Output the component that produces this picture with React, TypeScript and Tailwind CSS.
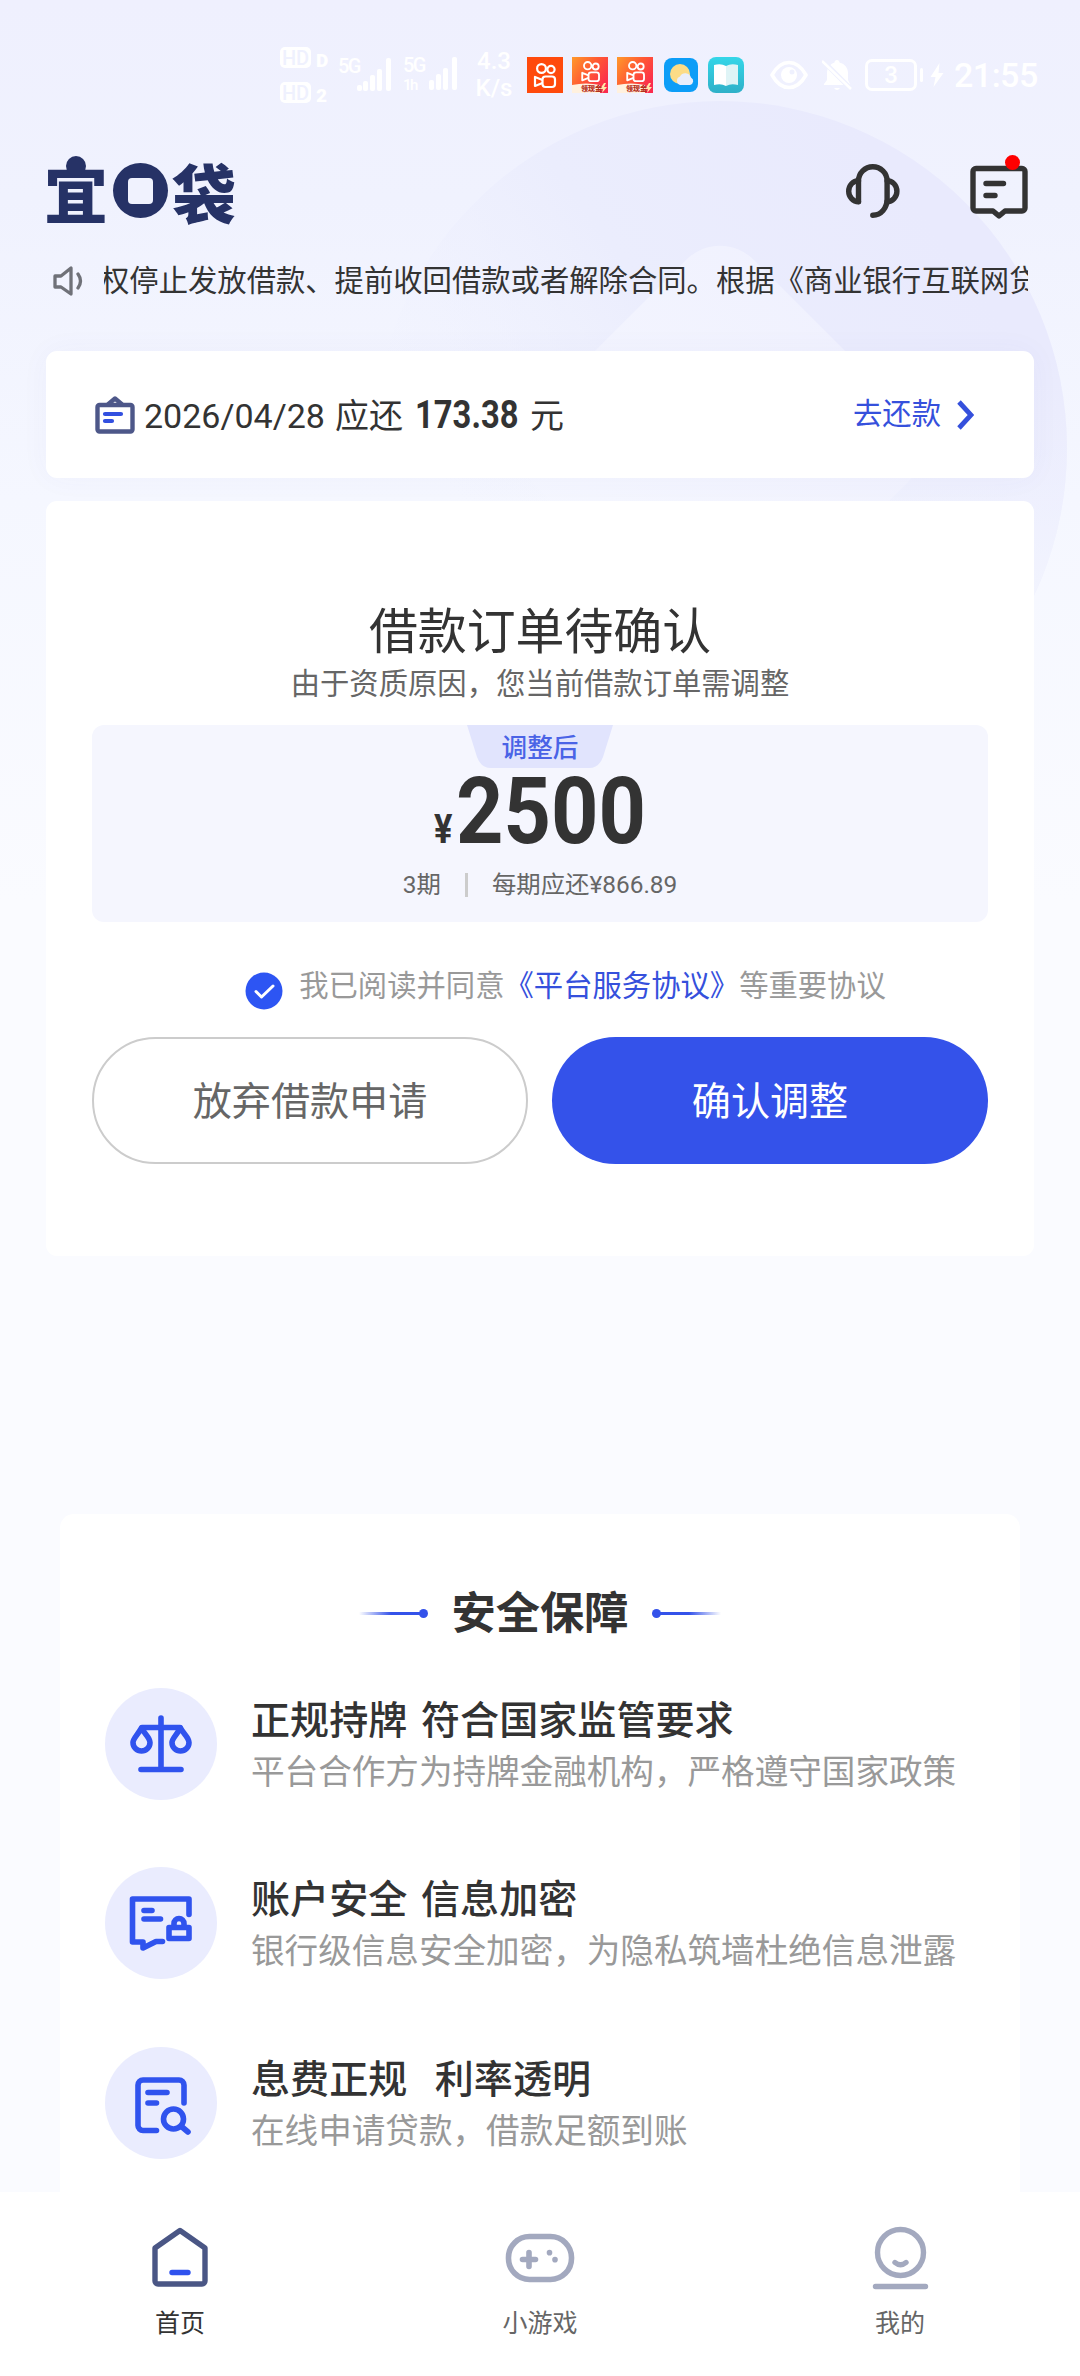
import type { ReactNode } from 'react';

const notice = '权停止发放借款、提前收回借款或者解除合同。根据《商业银行互联网贷款管理';

function Backdrop() {
    return (
        <svg className="absolute left-0 top-0" width="1080" height="900" viewBox="0 0 1080 900" fill="none">
            <defs>
                <linearGradient id="coin" x1="900" y1="180" x2="460" y2="500" gradientUnits="userSpaceOnUse">
                    <stop offset="0" stopColor="#e9eafd" />
                    <stop offset="0.5" stopColor="#ebedfd" />
                    <stop offset="1" stopColor="#f0f2fe" stopOpacity="0" />
                </linearGradient>
                <linearGradient id="coinFade" x1="0" y1="350" x2="0" y2="640" gradientUnits="userSpaceOnUse">
                    <stop offset="0" stopColor="#f4f6ff" stopOpacity="0" />
                    <stop offset="1" stopColor="#f6f8ff" stopOpacity="0.8" />
                </linearGradient>
                <linearGradient id="coinHole" x1="720" y1="240" x2="720" y2="640" gradientUnits="userSpaceOnUse">
                    <stop offset="0" stopColor="#f0f1fe" />
                    <stop offset="1" stopColor="#f5f7ff" />
                </linearGradient>
            </defs>
            <circle cx="720" cy="448" r="347" fill="url(#coin)" />
            <circle cx="720" cy="448" r="347" fill="url(#coinFade)" />
            <rect x="563" y="291" width="314" height="314" rx="48" transform="rotate(45 720 448)" fill="url(#coinHole)" />
        </svg>
    );
}

function SignalBars({ short }: { short?: boolean }) {
    return (
        <svg width="36" height="36" viewBox="0 0 36 36" fill="white">
            {!short && <rect x="0" y="28" width="5" height="6" rx="2" />}
            <rect x="6" y="24" width="5" height="10" rx="2" />
            <rect x="13" y="18" width="5" height="16" rx="2" />
            <rect x="20" y="12" width="5" height="22" rx="2" />
            <rect x="29" y="1" width="5" height="33" rx="2" />
        </svg>
    );
}

function HdBadge({ sim }: { sim: string }) {
    return (
        <div className="flex items-end gap-[5px]">
            <span className="flex h-[21px] w-[31px] items-center justify-center rounded-[5px] bg-white text-[20px] font-medium leading-none text-[#eff1fe]">HD</span>
            <span className="text-[19px] font-black leading-[15px]">{sim}</span>
        </div>
    );
}

function CameraGlyph() {
    return (
        <g fill="none" stroke="white" strokeWidth="2.2">
            <circle cx="14.5" cy="11.5" r="4.4" />
            <circle cx="24" cy="12.5" r="3.6" />
            <rect x="15.5" y="19.5" width="12.5" height="10.5" rx="3" />
            <path d="M15.5 23 8 20v9l7.500-3" strokeLinejoin="round" />
        </g>
    );
}

function KuaishouLite({ id }: { id: string }) {
    return (
        <div className="relative h-9 w-9">
            <svg width="36" height="36" viewBox="0 0 36 36">
                <defs>
                    <linearGradient id={id} x1="0" y1="0" x2="1" y2="0.7">
                        <stop offset="0" stopColor="#ff9a2b" />
                        <stop offset="0.5" stopColor="#ff5a33" />
                        <stop offset="1" stopColor="#fb2b4e" />
                    </linearGradient>
                </defs>
                <rect width="36" height="36" fill={`url(#${id})`} />
                <g transform="translate(3.500 -1) scale(0.84)">
                    <CameraGlyph />
                </g>
                <path d="M0 28q14-3 28 0v8H0z" fill="#fff1df" />
                <path d="m32 26-4 6h3l-1 4 5-6h-3l2-4z" fill="#ffe9a8" />
            </svg>
            <span className="absolute bottom-0 left-[9px] whitespace-nowrap text-[7px] font-black leading-[8px] text-[#b5301c]">领现金</span>
        </div>
    );
}

function StatusBar() {
    return (
        <div className="flex h-[150px] items-center pl-[280px] font-[Roboto,'Noto_Sans_CJK_SC',sans-serif] text-white">
            <div className="flex w-[58px] flex-col gap-[14px]">
                <HdBadge sim="D" />
                <HdBadge sim="2" />
            </div>
            <div className="flex w-[65px] items-start">
                <span className="w-[19px] text-[20px] font-medium leading-[18px] tracking-[-1.5px]">5G</span>
                <SignalBars />
            </div>
            <div className="flex w-[73px] items-start">
                <span className="w-[20px] text-[20px] font-medium leading-[18px] tracking-[-1.5px]">5G<br /><span className="text-[15px]">1h</span></span>
                <SignalBars short />
            </div>
            <div className="flex w-[36px] flex-col items-center text-[24px] font-medium leading-[27px]">
                <span>4.3</span>
                <span>K/s</span>
            </div>
            <div className="ml-[15px] flex items-center gap-[9px]">
                <svg width="36" height="36" viewBox="0 0 36 36">
                    <rect width="36" height="36" fill="#ff4a0c" />
                    <CameraGlyph />
                </svg>
                <KuaishouLite id="ksA" />
                <KuaishouLite id="ksB" />
            </div>
            <svg className="ml-[11px]" width="34" height="34" viewBox="0 0 34 34">
                <rect width="34" height="34" rx="8" fill="#0c9df7" />
                <circle cx="16" cy="16" r="10" fill="#fcdc86" />
                <path d="M16 27a4.500 4.500 0 0 1 0-8.500 6 6 0 0 1 11 1 4 4 0 0 1-1 7.500z" fill="#e9eefb" />
            </svg>
            <svg className="ml-[10px]" width="36" height="36" viewBox="0 0 36 36">
                <defs>
                    <linearGradient id="book" x1="0" y1="0" x2="0" y2="1">
                        <stop offset="0" stopColor="#35d6e8" />
                        <stop offset="1" stopColor="#2fb0c8" />
                    </linearGradient>
                </defs>
                <rect width="36" height="36" rx="8" fill="url(#book)" />
                <path d="M6 8q7-2 12 1v20q-5-3-12-1z" fill="#fff" />
                <path d="M30 8q-7-2-12 1v20q5-3 12-1z" fill="#dff4f6" />
            </svg>
            <svg className="ml-[26px]" width="38" height="30" viewBox="0 0 38 30" fill="none">
                <path d="M2 15Q9 2.500 19 2.500T36 15Q29 27.500 19 27.500T2 15Z" stroke="white" strokeWidth="3.600" strokeLinejoin="round" />
                <circle cx="19" cy="15" r="8" fill="white" />
                <circle cx="22" cy="12" r="2.500" fill="#eff1fe" />
            </svg>
            <svg className="ml-[14px]" width="32" height="33" viewBox="0 0 32 33" fill="white">
                <path d="M15 1c1.500 0 2.500 1 2.500 2.500C23 5 26 9 26 14v7l2 4v1H2v-1l3-4v-7C5 9 8 5 12.500 3.500 12.500 2 13.500 1 15 1Z" />
                <path d="M12 29h6q-3 4-6 0Z" />
                <path d="M2 3 30 31" stroke="#eff1fe" strokeWidth="5" />
                <path d="M0 2 29 30" stroke="white" strokeWidth="2.500" />
            </svg>
            <div className="ml-[11px] flex h-[32px] w-[52px] items-center justify-center rounded-[7px] border-[3px] border-white text-[24px] font-medium leading-none">3</div>
            <div className="ml-[3px] h-[14px] w-[3px] rounded bg-white" />
            <svg className="ml-[7px]" width="14" height="24" viewBox="0 0 13 24" fill="white">
                <path d="M9 0 0 14h5L3 24l10-14H8z" />
            </svg>
            <span className="ml-[10px] text-[34px] font-medium leading-none tracking-[-0.5px]">21:55</span>
        </div>
    );
}

function Logo() {
    return (
        <div className="flex h-[69px] w-[190px] items-center whitespace-nowrap font-['Noto_Sans_CJK_SC',sans-serif] text-[64px] font-black leading-[69px] text-[#263266]">
            <span className="relative -ml-[2px] w-[66px]">
                宜
                <i className="absolute left-[22px] top-0 h-[20px] w-[20px] rounded-full bg-[#263266]" />
            </span>
            <span className="ml-[4px] flex h-[55px] w-[55px] shrink-0 items-center justify-center rounded-full bg-[#263266]" aria-label="口">
                <i className="h-[26px] w-[25px] rounded-[4px] bg-[#f0f2fe]" />
            </span>
            <span className="ml-[4px]">袋</span>
        </div>
    );
}

function HeadsetIcon() {
    return (
        <svg width="54" height="54" viewBox="0 0 54 54" fill="none" stroke="#333" strokeWidth="5.400" strokeLinecap="round">
            <path d="M12.500 37.500V17a14.300 14.300 0 0 1 28.600 0v18c0 9-6 16.300-14.300 16.300" />
            <path d="M12.500 16.700a9.800 10.500 0 0 0 0 21M41.100 16.700a9.800 10.500 0 0 1 0 21" />
        </svg>
    );
}

function MessageIcon() {
    return (
        <div className="relative">
            <svg width="58" height="56" viewBox="0 0 58 56" fill="none" stroke="#333" strokeWidth="5.400" strokeLinecap="round" strokeLinejoin="round">
                <path d="M6 5.500h46a3 3 0 0 1 3 3V45a3 3 0 0 1-3 3H35l-6 5-6-5H6a3 3 0 0 1-3-3V8.500a3 3 0 0 1 3-3Z" />
                <path d="M16 20.500h17.500M16 32.500h9" />
            </svg>
            <i className="absolute -top-[8px] left-[35px] h-[15px] w-[15px] rounded-full bg-[#fe0000]" />
        </div>
    );
}

function SpeakerIcon() {
    return (
        <svg width="30" height="30" viewBox="0 0 30 30" fill="none" stroke="#6f7178" strokeWidth="3.300" strokeLinejoin="round" strokeLinecap="round">
            <path d="M2 10h6l10-8v26L8 21H2Z" />
            <path d="M25 8q5 7 0 14" />
        </svg>
    );
}

function BillIcon() {
    return (
        <svg width="40" height="38" viewBox="0 0 40 38" fill="none" strokeLinecap="round" strokeLinejoin="round">
            <rect x="2.5" y="9" width="35" height="26.500" rx="2" stroke="#4d5789" strokeWidth="4.400" />
            <path d="m13.500 8 6.500-5.500L26.500 8" stroke="#4d5789" strokeWidth="4.400" />
            <path d="M10 18h16M10 25h7" stroke="#3350e0" strokeWidth="4.200" />
        </svg>
    );
}

function Amount({ children, className }: { children: ReactNode; className: string }) {
    return <span className={`inline-block font-bold ${className}`}>{children}</span>;
}

function RepayCard() {
    return (
        <div className="mx-[46px] mt-12 flex h-[127px] items-center rounded-[11px] bg-white pl-[49px] pr-[60px] shadow-[0_0_30px_rgba(80,80,180,0.04)]">
            <BillIcon />
            <div className="ml-[9px] flex items-baseline pt-[1px] text-[34px] leading-[50px]">
                <span className="w-[182px]">2026/04/28</span>
                <span className="ml-[9px]">应还</span>
                <Amount className="ml-[12px] w-[103px] origin-left scale-x-[0.84] text-[39px] leading-[50px]">173.38</Amount>
                <span className="ml-[12px]">元</span>
            </div>
            <div className="ml-auto flex items-center gap-4 text-[29.33px] leading-[44px] text-[#3550dc]">
                <span className="-mt-[2px]">去还款</span>
                <svg width="17" height="30" viewBox="0 0 17 30" fill="none" stroke="#3550dc" strokeWidth="4.800">
                    <path d="m2 2 12 13L2 28" />
                </svg>
            </div>
        </div>
    );
}

function OrderCard() {
    return (
        <div className="mx-[46px] mt-[23px] flex h-[755px] flex-col items-center rounded-[11px] bg-white pt-[102px]">
            <h1 className="text-[48.9px] leading-[60px]">借款订单待确认</h1>
            <p className="text-[29.33px] leading-[42px] text-[#666]">由于资质原因，您当前借款订单需调整</p>

            <div className="relative mt-[20px] flex h-[197px] w-[896px] flex-col items-center rounded-[12px] bg-[#f5f6fe]">
                <svg className="absolute left-[375px] top-0" width="146" height="43" viewBox="0 0 146 43">
                    <path d="M0 0h146l-10 32q-4 11-14 11H24q-10 0-14-11Z" fill="#e1e4fd" />
                </svg>
                <span className="relative text-[25.6px] font-medium leading-[46px] text-[#4a63e6]">调整后</span>
                <div className="relative mt-[6px] flex h-[70px] items-baseline justify-center leading-[70px]">
                    <Amount className="mr-[2px] w-[20px] origin-left scale-x-[0.86] text-[40px]">¥</Amount>
                    <Amount className="w-[190px] origin-left scale-x-[0.89] text-[93px]">2500</Amount>
                </div>
                <div className="mt-[17px] flex items-center text-[24.4px] leading-[42px] text-[#666]">
                    <span>3期</span>
                    <i className="mx-[24px] h-[24px] w-[3px] bg-[#ccc]" />
                    <span>每期应还¥866.89</span>
                </div>
            </div>

            <div className="ml-[51px] mt-[34px] flex h-[60px] items-center text-[29.33px] leading-[44px] text-[#999]">
                <svg className="mr-[16px] mt-[10px]" width="38" height="38" viewBox="0 0 38 38" fill="none">
                    <circle cx="19" cy="19" r="18.500" fill="#2d55f3" />
                    <path d="m11 19.500 5.500 5.500L28 14" stroke="white" strokeWidth="3" strokeLinecap="round" strokeLinejoin="round" />
                </svg>
                <span>我已阅读并同意<span className="text-[#3550dc]">《平台服务协议》</span>等重要协议</span>
            </div>

            <div className="mt-[21px] flex gap-6 text-[39.1px]">
                <button className="h-[127px] w-[436px] rounded-full border-2 border-[#ccc] pt-[4px] text-[#666]">放弃借款申请</button>
                <button className="h-[127px] w-[436px] rounded-full bg-[#3452ea] pt-[4px] text-white">确认调整</button>
            </div>
        </div>
    );
}

function ScaleIcon() {
    return (
        <>
            <path d="M56 30v50M36 81.500h40M37 39.500h38" />
            <path d="M36.500 40c-4 7-8.500 10.500-8.500 14.500a8.500 8.500 0 0 0 17 0c0-5-5-8-8.500-14.500ZM75.500 40c-4 7-8.500 10.500-8.500 14.500a8.500 8.500 0 0 0 17 0c0-5-5-8-8.500-14.500Z" />
        </>
    );
}

function PrivacyIcon() {
    return (
        <>
            <path d="M84 47.500V32H27.500v43H38v6l13-6.500h6.500" />
            <path d="M39 43.500h8M39 52h16.500" />
            <path d="M64 60.500h20V71.500H64ZM69 59v-2.500a5 5 0 0 1 10 0V59" />
        </>
    );
}

function RateIcon() {
    return (
        <>
            <path d="M51.500 83.500H38a5 5 0 0 1-5-5V38a5 5 0 0 1 5-5h36a5 5 0 0 1 5 5v18" />
            <path d="M43 45.500h19M43 56h8.500" />
            <circle cx="68.500" cy="72" r="10" />
            <path d="m76.500 79.500 6.500 5.500" />
        </>
    );
}

const guarantees = [
    { icon: <ScaleIcon />, title: '正规持牌 符合国家监管要求', desc: '平台合作方为持牌金融机构，严格遵守国家政策' },
    { icon: <PrivacyIcon />, title: '账户安全 信息加密', desc: '银行级信息安全加密，为隐私筑墙杜绝信息泄露' },
    { icon: <RateIcon />, title: '息费正规  利率透明', desc: '在线申请贷款，借款足额到账' },
];

function SafetyCard() {
    return (
        <div className="mx-[60px] mt-[258px] h-[678px] rounded-t-[14px] bg-white pt-[68px]">
            <div className="flex h-[62px] items-center justify-center">
                <span className="flex items-center">
                    <i className="h-[3px] w-[64px] bg-gradient-to-r from-transparent to-[#3452ea] to-50%" />
                    <i className="-ml-1 h-[9px] w-[9px] rounded-full bg-[#3452ea]" />
                </span>
                <h2 className="mx-[23px] mt-[2px] text-[44.300px] font-bold leading-[62px]">安全保障</h2>
                <span className="flex items-center">
                    <i className="-mr-1 h-[9px] w-[9px] rounded-full bg-[#3452ea]" />
                    <i className="h-[3px] w-[64px] bg-gradient-to-l from-transparent to-[#3452ea] to-50%" />
                </span>
            </div>
            <div className="ml-[45px] mt-[44px] flex flex-col gap-[67.300px]">
                {guarantees.map((item) => (
                    <div key={item.title} className="flex h-[112px]">
                        <svg width="112" height="112" viewBox="0 0 112 112" fill="none" stroke="#3053ee" strokeWidth="5.600" strokeLinecap="round" strokeLinejoin="round">
                            <circle cx="56" cy="56" r="56" fill="#eaecfe" stroke="none" />
                            {item.icon}
                        </svg>
                        <div className="ml-[34px] whitespace-pre pt-[4px]">
                            <h3 className="text-[39.1px] font-medium leading-[58px] [word-spacing:4px]">{item.title}</h3>
                            <p className="text-[33.600px] leading-[46px] text-[#999]">{item.desc}</p>
                        </div>
                    </div>
                ))}
            </div>
        </div>
    );
}

function TabBar() {
    return (
        <nav className="grid h-[184px] grid-cols-3 bg-white pt-[32px] text-center text-[25px] leading-[36px] text-[#666]">
            <div className="flex flex-col items-center text-[#333]">
                <svg width="60" height="72" viewBox="0 0 60 72" fill="none" strokeLinecap="round" strokeLinejoin="round">
                    <path d="M30 6.500 55 24v33a3 3 0 0 1-3 3H8a3 3 0 0 1-3-3V24Z" stroke="#4a5685" strokeWidth="5.400" />
                    <path d="M22 48.500h16" stroke="#2f52ee" strokeWidth="5.400" />
                </svg>
                <span className="mt-[10px]">首页</span>
            </div>
            <div className="flex flex-col items-center">
                <svg width="72" height="72" viewBox="0 0 72 72" fill="none" stroke="#a3a9bf" strokeWidth="5.600" strokeLinecap="round">
                    <rect x="4.500" y="12.500" width="63" height="43" rx="21" />
                    <path d="M18.500 35.500h13M25 28.500v14" />
                    <path d="M45.500 28.500v.2M51 35.500v.2" />
                </svg>
                <span className="mt-[10px]">小游戏</span>
            </div>
            <div className="flex flex-col items-center">
                <svg width="60" height="72" viewBox="0 0 60 72" fill="none" stroke="#a3a9bf" strokeWidth="5.400" strokeLinecap="round">
                    <circle cx="30.500" cy="28.500" r="23" />
                    <path d="M25 38.500q5.500 4.500 11 0M5.500 62.500h50" />
                </svg>
                <span className="mt-[10px]">我的</span>
            </div>
        </nav>
    );
}

export default function App() {
    return (
        <div className="relative h-[2376px] w-[1080px] overflow-hidden bg-[linear-gradient(180deg,#eff0fe_0,#f0f2fe_200px,#f5f7ff_500px,#fafbff_900px)] font-[Roboto,'Noto_Sans_CJK_SC',sans-serif] text-[#333]">
            <Backdrop />
            <div className="relative flex flex-col">
                <StatusBar />
                <header className="mt-[6px] flex h-[69px] items-center pl-[46px] pr-[52px]">
                    <Logo />
                    <div className="ml-auto flex items-center gap-[70px]">
                        <HeadsetIcon />
                        <MessageIcon />
                    </div>
                </header>
                <div className="mt-[34px] flex h-[44px] items-center pl-[53px]">
                    <SpeakerIcon />
                    <div className="ml-[21px] w-[924px] overflow-hidden">
                        <p className="-ml-[4px] whitespace-nowrap text-[29.330px] leading-[44px]">{notice}</p>
                    </div>
                </div>
                <RepayCard />
                <OrderCard />
                <SafetyCard />
                <TabBar />
            </div>
        </div>
    );
}
